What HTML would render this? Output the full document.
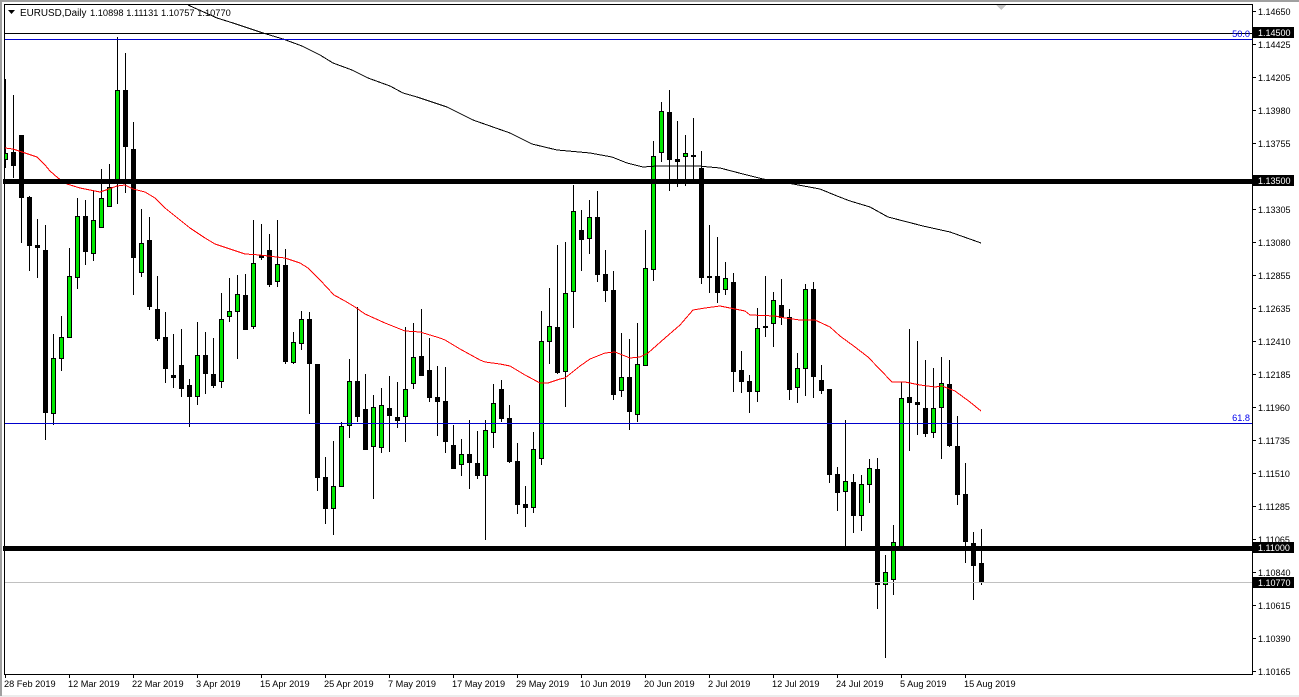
<!DOCTYPE html>
<html><head><meta charset="utf-8"><title>EURUSD,Daily</title>
<style>
html,body{margin:0;padding:0;width:1299px;height:697px;overflow:hidden;background:#fff}
svg{display:block}
text{font-family:"Liberation Sans",Arial,sans-serif;font-size:9.2px;fill:#000}
.a text{font-size:9px}
</style></head><body>
<svg width="1299" height="697" viewBox="0 0 1299 697" xmlns="http://www.w3.org/2000/svg">
<defs><clipPath id="c"><rect x="5" y="5" width="1247" height="669"/></clipPath></defs>
<rect width="1299" height="697" fill="#fff"/>
<rect x="0" y="695" width="1299" height="2" fill="#ececec"/>
<rect x="0" y="0" width="1299" height="2" fill="#a0a0a0"/>
<rect x="0" y="0" width="2" height="696" fill="#a0a0a0"/>
<g clip-path="url(#c)" shape-rendering="crispEdges">
<path fill="none" stroke="#000" d="M5.5 79V168M13.5 95V178M21.5 135V243M29.5 196V271M37.5 219V278M45.5 225V440M53.5 334V425M61.5 316V371M69.5 248V338M77.5 198V289M85.5 200V265M93.5 191V261M101.5 169V228M109.5 164V207M117.5 37V204M125.5 53V193M133.5 122V295M141.5 209V277M149.5 217V310M157.5 276V341M165.5 312V383M173.5 334V388M181.5 329V397M189.5 379V427M197.5 322V405M205.5 332V394M213.5 338V388M221.5 293V388M229.5 278V322M237.5 275V359M245.5 274V330M253.5 220V329M261.5 224V260M269.5 234V287M277.5 220V287M285.5 249V364M293.5 332V364M301.5 311V350M309.5 312V414M317.5 364V491M325.5 457V524M333.5 441V535M341.5 422V487M349.5 359V438M357.5 307V422M365.5 374V450M373.5 395V499M381.5 388V453M389.5 376V452M397.5 382V428M405.5 327V442M413.5 323V389M421.5 309V376M429.5 338V402M437.5 366V436M445.5 367V453M453.5 425V469M461.5 439V476M469.5 420V489M477.5 431V479M485.5 420V540M493.5 384V448M501.5 380V422M509.5 405V463M517.5 443V514M525.5 486V527M533.5 432V513M541.5 311V465M549.5 288V364M557.5 245V374M565.5 242V407M573.5 185V328M581.5 210V271M589.5 200V254M597.5 191V282M605.5 250V302M613.5 271V400M621.5 333V397M629.5 339V430M637.5 323V422M645.5 230V366M653.5 141V281M661.5 102V162M669.5 90V191M677.5 121V187M685.5 135V186M693.5 118V182M701.5 151V284M709.5 225V293M717.5 237V303M725.5 262V295M733.5 273V392M741.5 351V393M749.5 375V413M757.5 308V402M765.5 276V337M773.5 292V347M781.5 279V325M789.5 309V400M797.5 353V403M805.5 284V396M813.5 282V398M821.5 365V394M829.5 389V483M837.5 467V511M845.5 420V548M853.5 474V533M861.5 475V531M869.5 459V503M877.5 458V609M885.5 555V658M893.5 525V595M901.5 382V549M909.5 329V451M917.5 341V435M925.5 360V437M933.5 368V438M941.5 357V459M949.5 360V447M957.5 416V505M965.5 463V563M973.5 532V600M981.5 529V585"/>
<path fill="#000" d="M11 152h5v14h-5zM19 135h5v63h-5zM27 197h5v49h-5zM35 245h5v3h-5zM43 250h5v163h-5zM83 216h5v36h-5zM123 90h5v57h-5zM131 149h5v109h-5zM147 240h5v67h-5zM155 309h5v30h-5zM163 337h5v32h-5zM171 375h5v3h-5zM179 365h5v24h-5zM187 385h5v12h-5zM203 355h5v19h-5zM211 374h5v12h-5zM243 295h5v35h-5zM259 255h5v3h-5zM267 250h5v35h-5zM283 265h5v97h-5zM307 319h5v45h-5zM315 364h5v114h-5zM323 477h5v32h-5zM355 381h5v36h-5zM363 409h5v41h-5zM387 408h5v8h-5zM395 417h5v4h-5zM419 356h5v20h-5zM427 370h5v28h-5zM435 397h5v5h-5zM443 401h5v41h-5zM451 445h5v24h-5zM467 454h5v9h-5zM475 463h5v13h-5zM499 389h5v30h-5zM507 418h5v44h-5zM515 461h5v44h-5zM523 504h5v4h-5zM555 327h5v46h-5zM579 230h5v10h-5zM595 217h5v58h-5zM603 274h5v17h-5zM611 290h5v105h-5zM627 377h5v35h-5zM667 112h5v48h-5zM675 159h5v3h-5zM691 155h5v2h-5zM699 168h5v110h-5zM707 276h5v2h-5zM715 276h5v17h-5zM731 282h5v90h-5zM739 370h5v12h-5zM747 381h5v11h-5zM763 326h5v2h-5zM779 305h5v13h-5zM787 317h5v73h-5zM811 289h5v88h-5zM819 380h5v11h-5zM827 389h5v86h-5zM835 474h5v19h-5zM851 482h5v34h-5zM875 469h5v116h-5zM907 397h5v6h-5zM915 402h5v3h-5zM923 408h5v26h-5zM947 384h5v62h-5zM955 446h5v49h-5zM963 494h5v48h-5zM971 543h5v23h-5zM979 563h5v20h-5z"/>
<path fill="#00e800" stroke="#000" d="M3.5 153.5h4v6h-4zM51.5 358.5h4v55h-4zM59.5 337.5h4v21h-4zM67.5 276.5h4v61h-4zM75.5 216.5h4v61h-4zM91.5 220.5h4v33h-4zM99.5 198.5h4v29h-4zM107.5 187.5h4v19h-4zM115.5 90.5h4v89h-4zM139.5 243.5h4v29h-4zM195.5 355.5h4v41h-4zM219.5 319.5h4v62h-4zM227.5 311.5h4v5h-4zM235.5 294.5h4v17h-4zM251.5 263.5h4v63h-4zM275.5 264.5h4v17h-4zM291.5 342.5h4v20h-4zM299.5 319.5h4v24h-4zM331.5 486.5h4v22h-4zM339.5 426.5h4v60h-4zM347.5 381.5h4v44h-4zM371.5 407.5h4v39h-4zM379.5 405.5h4v42h-4zM403.5 389.5h4v27h-4zM411.5 357.5h4v26h-4zM459.5 454.5h4v10h-4zM483.5 430.5h4v45h-4zM491.5 403.5h4v29h-4zM531.5 449.5h4v58h-4zM539.5 341.5h4v117h-4zM547.5 326.5h4v15h-4zM563.5 293.5h4v78h-4zM571.5 211.5h4v80h-4zM587.5 217.5h4v21h-4zM619.5 377.5h4v13h-4zM635.5 364.5h4v50h-4zM643.5 268.5h4v97h-4zM651.5 156.5h4v113h-4zM659.5 111.5h4v41h-4zM683.5 153.5h4v3h-4zM723.5 278.5h4v11h-4zM755.5 328.5h4v63h-4zM771.5 300.5h4v23h-4zM795.5 368.5h4v19h-4zM803.5 289.5h4v79h-4zM843.5 481.5h4v10h-4zM859.5 484.5h4v31h-4zM867.5 468.5h4v16h-4zM883.5 572.5h4v12h-4zM891.5 542.5h4v37h-4zM899.5 398.5h4v150h-4zM931.5 408.5h4v24h-4zM939.5 383.5h4v24h-4z"/>
<polyline fill="none" stroke="#000" points="188,5 217,18 233,23 263,33 283,39 302,46 320,55 333,63 352,70 368,78 390,86 403,93 417,97 447,107 473,120 510,133 532,144 557,150 590,153 612,157 627,163 643,167 657,166 698,166 720,168 743,174 763,179 793,184 820,189 837,196 850,201 870,207 888,217 923,226 950,232 981,243"/>
<polyline fill="none" stroke="#f00" points="5,148 13,149 25,153 37,157 45,165 50,171 58,178 67,184 80,188 100,192 109,189 117,186 125,185 133,189 145,192 155,198 165,208 175,216 190,228 205,238 215,244 230,249 245,254 260,255 285,258 300,263 308,268 320,280 334,295 345,301 355,307 365,314 385,323 405,331 420,332 440,338 445,340 460,349 480,360 485,362 500,364 510,366 525,375 540,383 548,383 560,379 565,378 580,366 590,359 605,353 615,352 630,358 640,357 648,353 665,338 680,325 693,310 705,308 720,306 735,309 745,311 750,315 775,316 785,318 800,320 815,320 830,327 840,336 855,347 868,357 892,382 905,382 920,385 935,387 942,386 955,391 970,402 981,411"/>
<path fill="none" stroke="#c0c0c0" d="M5 582.5H1252"/>
<path fill="none" stroke="#0000cc" d="M5 39.5H1252M5 423.5H1252"/>
<path fill="none" stroke="#000" d="M5 33.5H1252"/>
<path fill="#c4c4c4" d="M996 5h10l-5 5z"/>
</g>
<g shape-rendering="crispEdges">
<rect x="3" y="179" width="1249" height="5" fill="#000"/>
<rect x="3" y="546" width="1249" height="5" fill="#000"/>
<path fill="none" stroke="#000" d="M4.5 4.5H1252.5V674.5H4.5ZM1252 11.5h4M1252 44.5h4M1252 77.5h4M1252 110.5h4M1252 143.5h4M1252 176.5h4M1252 209.5h4M1252 242.5h4M1252 275.5h4M1252 308.5h4M1252 341.5h4M1252 374.5h4M1252 407.5h4M1252 440.5h4M1252 473.5h4M1252 506.5h4M1252 539.5h4M1252 572.5h4M1252 605.5h4M1252 638.5h4M1252 671.5h4M5.5 674V678M69.5 674V678M133.5 674V678M197.5 674V678M261.5 674V678M325.5 674V678M389.5 674V678M453.5 674V678M517.5 674V678M581.5 674V678M645.5 674V678M709.5 674V678M773.5 674V678M837.5 674V678M901.5 674V678M965.5 674V678"/>
</g>
<path fill="#000" d="M8 10h7l-3.500 4z"/>
<text x="20" y="16" style="font-size:9.9px">EURUSD,Daily</text>
<text x="90" y="16" style="font-size:9.3px">1.10898 1.11131 1.10757 1.10770</text>
<text x="1250" y="37" text-anchor="end" style="fill:#0000ee;font-size:9.2px">50.0</text>
<text x="1250" y="421" text-anchor="end" style="fill:#0000ee;font-size:9.2px">61.8</text>
<g class="a">
<text x="1258" y="15">1.14650</text>
<text x="1258" y="48">1.14425</text>
<text x="1258" y="81">1.14205</text>
<text x="1258" y="114">1.13980</text>
<text x="1258" y="147">1.13755</text>
<text x="1258" y="213">1.13305</text>
<text x="1258" y="246">1.13080</text>
<text x="1258" y="279">1.12855</text>
<text x="1258" y="312">1.12635</text>
<text x="1258" y="345">1.12410</text>
<text x="1258" y="378">1.12185</text>
<text x="1258" y="411">1.11960</text>
<text x="1258" y="444">1.11735</text>
<text x="1258" y="477">1.11510</text>
<text x="1258" y="510">1.11285</text>
<text x="1258" y="543">1.11065</text>
<text x="1258" y="576">1.10840</text>
<text x="1258" y="609">1.10615</text>
<text x="1258" y="642">1.10390</text>
<text x="1258" y="675">1.10165</text>
<rect x="1253" y="27" width="41" height="11" fill="#000"/>
<rect x="1253" y="175" width="41" height="11" fill="#000"/>
<rect x="1253" y="542" width="41" height="11" fill="#000"/>
<rect x="1253" y="577" width="41" height="11" fill="#000"/>
<text x="1258" y="36" style="fill:#fff">1.14500</text>
<text x="1258" y="184" style="fill:#fff">1.13500</text>
<text x="1258" y="551" style="fill:#fff">1.11000</text>
<text x="1258" y="586" style="fill:#fff">1.10770</text>
</g>
<g>
<text x="4" y="687">28 Feb 2019</text>
<text x="68" y="687">12 Mar 2019</text>
<text x="132" y="687">22 Mar 2019</text>
<text x="196" y="687">3 Apr 2019</text>
<text x="260" y="687">15 Apr 2019</text>
<text x="324" y="687">25 Apr 2019</text>
<text x="388" y="687">7 May 2019</text>
<text x="452" y="687">17 May 2019</text>
<text x="516" y="687">29 May 2019</text>
<text x="580" y="687">10 Jun 2019</text>
<text x="644" y="687">20 Jun 2019</text>
<text x="708" y="687">2 Jul 2019</text>
<text x="772" y="687">12 Jul 2019</text>
<text x="836" y="687">24 Jul 2019</text>
<text x="900" y="687">5 Aug 2019</text>
<text x="964" y="687">15 Aug 2019</text>
</g>
</svg>
</body></html>
